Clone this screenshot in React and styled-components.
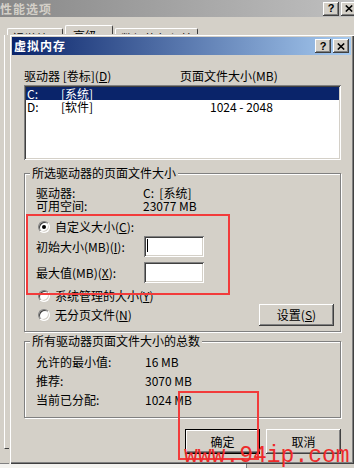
import React from "react";
import styled, { createGlobalStyle } from "styled-components";

const Global = createGlobalStyle`
  html, body { margin: 0; padding: 0; background: #d4d0c8; }
  body { width: 354px; height: 468px; overflow: hidden; }
  #root { width: 354px; height: 468px; }
`;

const FACE = "#d4d0c8";

const Screen = styled.div`
  position: relative;
  width: 354px;
  height: 468px;
  overflow: hidden;
  background: ${FACE};
  font-family: "Noto Sans CJK SC", "Noto Sans", sans-serif;
  font-size: 12px;
  line-height: 14px;
  color: #000;
`;

/* ---------- outer (background) window ---------- */
const OuterWindow = styled.div`
  display: flex;
  flex-direction: column;
  height: 100%;
`;

const OuterTitle = styled.div`
  flex: none;
  width: 357px;
  height: 17px;
  display: flex;
  align-items: center;
  justify-content: space-between;
  background: linear-gradient(90deg, #888888 0%, #c0c0c0 100%);
  color: #d4d0c8;
  font-weight: 700;
  letter-spacing: 1px;
`;

const CaptionGroup = styled.div`
  display: flex;
  gap: 2px;
`;

const CaptionButton = styled.div`
  width: 16px;
  height: 14px;
  box-sizing: border-box;
  display: flex;
  align-items: center;
  justify-content: center;
  background: ${FACE};
  box-shadow: inset -1px -1px #404040, inset 1px 1px #fff, inset -2px -2px #808080;
  color: #000;
  font-family: "Liberation Sans", sans-serif;
  font-weight: 700;
  font-size: 11px;
  line-height: 1;
  letter-spacing: 0;
`;

const Tabs = styled.div`
  flex: none;
  display: flex;
  align-items: flex-end;
  height: 18px;
  padding-left: 7px;
  margin-top: 0;
`;

const Tab = styled.div`
  box-sizing: border-box;
  width: ${(p) => p.$w}px;
  height: ${(p) => (p.$active ? 10 : 7)}px;
  margin-right: 2px;
  padding-left: ${(p) => p.$pl}px;
  padding-top: 3px;
  border-top: 1px solid #fff;
  border-left: 1px solid #fff;
  border-right: 1px solid #404040;
  border-radius: 2px 2px 0 0;
  overflow: hidden;
  line-height: 14px;
`;

const TabPanel = styled.div`
  flex: 1;
  margin-left: 4px;
  margin-bottom: 14px;
  border-left: 1px solid #fff;
  border-bottom: 1px solid #404040;
`;

const OuterFooter = styled.div`
  flex: none;
  height: 4px;
  display: flex;
  border-top: 1px solid #808080;
`;

const FooterLight = styled.div`
  width: 246px;
  background: #f4f3f0;
  border-right: 1px solid #808080;
`;

/* ---------- the modal dialog ---------- */
const Dialog = styled.div`
  position: absolute;
  left: 9px;
  top: 34px;
  width: 345px;
  height: 430px;
  box-sizing: border-box;
  padding: 3px;
  display: flex;
  flex-direction: column;
  background: ${FACE};
  box-shadow: inset 1px 1px ${FACE}, inset 2px 2px #fff, inset -1px -1px #404040,
    inset -2px -2px #808080;
`;

const TitleBar = styled.div`
  flex: none;
  height: 18px;
  display: flex;
  align-items: center;
  justify-content: space-between;
  padding: 0 2px 0 2px;
  background: linear-gradient(90deg, #0a246a 0%, #a6caf0 100%);
  color: #fff;
  font-weight: 700;
  letter-spacing: 1px;
`;

const Content = styled.div`
  display: flex;
  flex-direction: column;
  padding: 14px 10px 0 12px;
`;

const ListHeader = styled.div`
  display: grid;
  grid-template-columns: 156px 1fr;
`;

const ListBox = styled.div`
  margin-top: 2px;
  height: 75px;
  box-sizing: border-box;
  padding: 2px;
  background: #fff;
  box-shadow: inset 1px 1px #808080, inset -1px -1px #fff, inset 2px 2px #404040,
    inset -2px -2px ${FACE};
`;

const ListRow = styled.div`
  display: grid;
  grid-template-columns: 34px 149px 1fr;
  height: 13px;
  line-height: 13px;
  padding-left: 1px;
  background: ${(p) => (p.$selected ? "#0a246a" : "transparent")};
  color: ${(p) => (p.$selected ? "#fff" : "#000")};
`;

const Group = styled.fieldset`
  margin: ${(p) => p.$mt}px 0 0;
  padding: 0;
  min-width: 0;
  border: 1px solid #808080;
  box-shadow: inset 1px 1px #fff, 1px 1px #fff;
`;

const Legend = styled.legend`
  margin-left: 5px;
  padding: 0 2px;
  line-height: 14px;
  background: ${FACE};
`;

const GroupBody = styled.div`
  display: flex;
  flex-direction: column;
  padding: ${(p) => p.$pt}px 6px ${(p) => p.$pb}px 11px;
`;

const InfoGrid = styled.div`
  display: grid;
  grid-template-columns: ${(p) => p.$col}px 1fr;
  grid-auto-rows: ${(p) => p.$row}px;
  align-items: center;
`;

const RadioRow = styled.label`
  display: flex;
  align-items: center;
  gap: 5px;
  height: ${(p) => p.$h || 14}px;
  margin-top: ${(p) => p.$mt}px;
  padding-left: 2px;
`;

const Radio = styled.span`
  position: relative;
  flex: none;
  width: 12px;
  height: 12px;
  box-sizing: border-box;
  border-radius: 50%;
  background: #fff;
  border: 1px solid;
  border-color: #808080 #fff #fff #808080;
  box-shadow: inset 1px 1px #404040, inset -1px -1px ${FACE};
  &::after {
    content: "";
    display: ${(p) => (p.$checked ? "block" : "none")};
    position: absolute;
    left: 3px;
    top: 3px;
    width: 4px;
    height: 4px;
    border-radius: 50%;
    background: #000;
  }
`;

const FieldRow = styled.div`
  display: grid;
  grid-template-columns: 108px 60px;
  align-items: center;
  margin-top: ${(p) => p.$mt}px;
`;

const TextInput = styled.div`
  height: 21px;
  box-sizing: border-box;
  padding: 3px 0 0 3px;
  background: #fff;
  box-shadow: inset 1px 1px #808080, inset -1px -1px #fff, inset 2px 2px #404040,
    inset -2px -2px ${FACE};
`;

const Caret = styled.span`
  display: block;
  width: 1px;
  height: 13px;
  background: #000;
`;

const Spacer = styled.span`
  flex: 1;
`;

const Button = styled.div`
  flex: none;
  width: 75px;
  height: ${(p) => p.$h || 23}px;
  box-sizing: border-box;
  display: flex;
  align-items: center;
  justify-content: center;
  background: ${FACE};
  border: ${(p) => (p.$default ? "1px solid #000" : "none")};
  box-shadow: inset -1px -1px #404040, inset 1px 1px #fff, inset -2px -2px #808080;
`;

const ButtonRow = styled.div`
  display: flex;
  justify-content: flex-end;
  gap: 6px;
  margin-top: 11px;
  padding-right: 0;
`;

/* ---------- overlays (annotation marks) ---------- */
const Mark = styled.div`
  position: absolute;
  left: ${(p) => p.$x}px;
  top: ${(p) => p.$y}px;
  width: ${(p) => p.$w}px;
  height: ${(p) => p.$h}px;
  box-sizing: border-box;
  border: 2px solid #f23b3b;
  pointer-events: none;
`;

const Watermark = styled.div`
  position: absolute;
  left: 184px;
  top: 445px;
  font-family: "Liberation Mono", "DejaVu Sans Mono", monospace;
  font-size: 23px;
  line-height: 23px;
  color: #ee2a2a;
  white-space: nowrap;
  pointer-events: none;
`;

const CloseGlyph = () => (
  <svg width="8" height="7" viewBox="0 0 8 7" aria-hidden="true">
    <path d="M0.8 0.5 L7.2 6.5 M7.2 0.5 L0.8 6.5" stroke="#000" strokeWidth="1.6" fill="none" />
  </svg>
);

const Key = ({ k }) => (
  <>
    (<u>{k}</u>)
  </>
);

export default function App() {
  return (
    <>
      <Global />
      <Screen>
        <OuterWindow>
          <OuterTitle>
            <span>性能选项</span>
            <CaptionGroup>
              <CaptionButton>?</CaptionButton>
              <CaptionButton>
                <CloseGlyph />
              </CaptionButton>
            </CaptionGroup>
          </OuterTitle>
          <Tabs>
            <Tab $w={56} $pl={4}>视觉效果</Tab>
            <Tab $w={48} $pl={7} $active>高级</Tab>
            <Tab $w={83} $pl={5}>数据执行保护</Tab>
          </Tabs>
          <TabPanel />
          <OuterFooter>
            <FooterLight />
          </OuterFooter>
        </OuterWindow>

        <Dialog>
          <TitleBar>
            <span>虚拟内存</span>
            <CaptionGroup>
              <CaptionButton>?</CaptionButton>
              <CaptionButton>
                <CloseGlyph />
              </CaptionButton>
            </CaptionGroup>
          </TitleBar>
          <Content>
            <ListHeader>
              <span>
                驱动器 [卷标]<Key k="D" />
              </span>
              <span>页面文件大小(MB)</span>
            </ListHeader>
            <ListBox>
              <ListRow $selected>
                <span>C:</span>
                <span>[系统]</span>
                <span />
              </ListRow>
              <ListRow>
                <span>D:</span>
                <span>[软件]</span>
                <span>1024 - 2048</span>
              </ListRow>
            </ListBox>

            <Group $mt={6}>
              <Legend>所选驱动器的页面文件大小</Legend>
              <GroupBody $pt={6} $pb={5}>
                <InfoGrid $col={107} $row={13}>
                  <span>驱动器:</span>
                  <span>C:&nbsp;&nbsp;[系统]</span>
                  <span>可用空间:</span>
                  <span>23077 MB</span>
                </InfoGrid>
                <RadioRow $mt={8}>
                  <Radio $checked />
                  <span>
                    自定义大小<Key k="C" />:
                  </span>
                </RadioRow>
                <FieldRow $mt={2}>
                  <span>
                    初始大小(MB)<Key k="I" />:
                  </span>
                  <TextInput>
                    <Caret />
                  </TextInput>
                </FieldRow>
                <FieldRow $mt={5}>
                  <span>
                    最大值(MB)<Key k="X" />:
                  </span>
                  <TextInput />
                </FieldRow>
                <RadioRow $mt={6}>
                  <Radio />
                  <span>
                    系统管理的大小<Key k="Y" />
                  </span>
                </RadioRow>
                <RadioRow $mt={1} $h={22}>
                  <Radio />
                  <span>
                    无分页文件<Key k="N" />
                  </span>
                  <Spacer />
                  <Button $h={22}>
                    设置<Key k="S" />
                  </Button>
                </RadioRow>
              </GroupBody>
            </Group>

            <Group $mt={2}>
              <Legend>所有驱动器页面文件大小的总数</Legend>
              <GroupBody $pt={4} $pb={8}>
                <InfoGrid $col={109} $row={19}>
                  <span>允许的最小值:</span>
                  <span>16 MB</span>
                  <span>推荐:</span>
                  <span>3070 MB</span>
                  <span>当前已分配:</span>
                  <span>1024 MB</span>
                </InfoGrid>
              </GroupBody>
            </Group>

            <ButtonRow>
              <Button $default $h={25}>确定</Button>
              <Button $h={25}>取消</Button>
            </ButtonRow>
          </Content>
        </Dialog>

        <Mark $x={26} $y={214} $w={204} $h={81} />
        <Mark $x={178} $y={391} $w={81} $h={69} />
        <Watermark>www.94ip.com</Watermark>
      </Screen>
    </>
  );
}
